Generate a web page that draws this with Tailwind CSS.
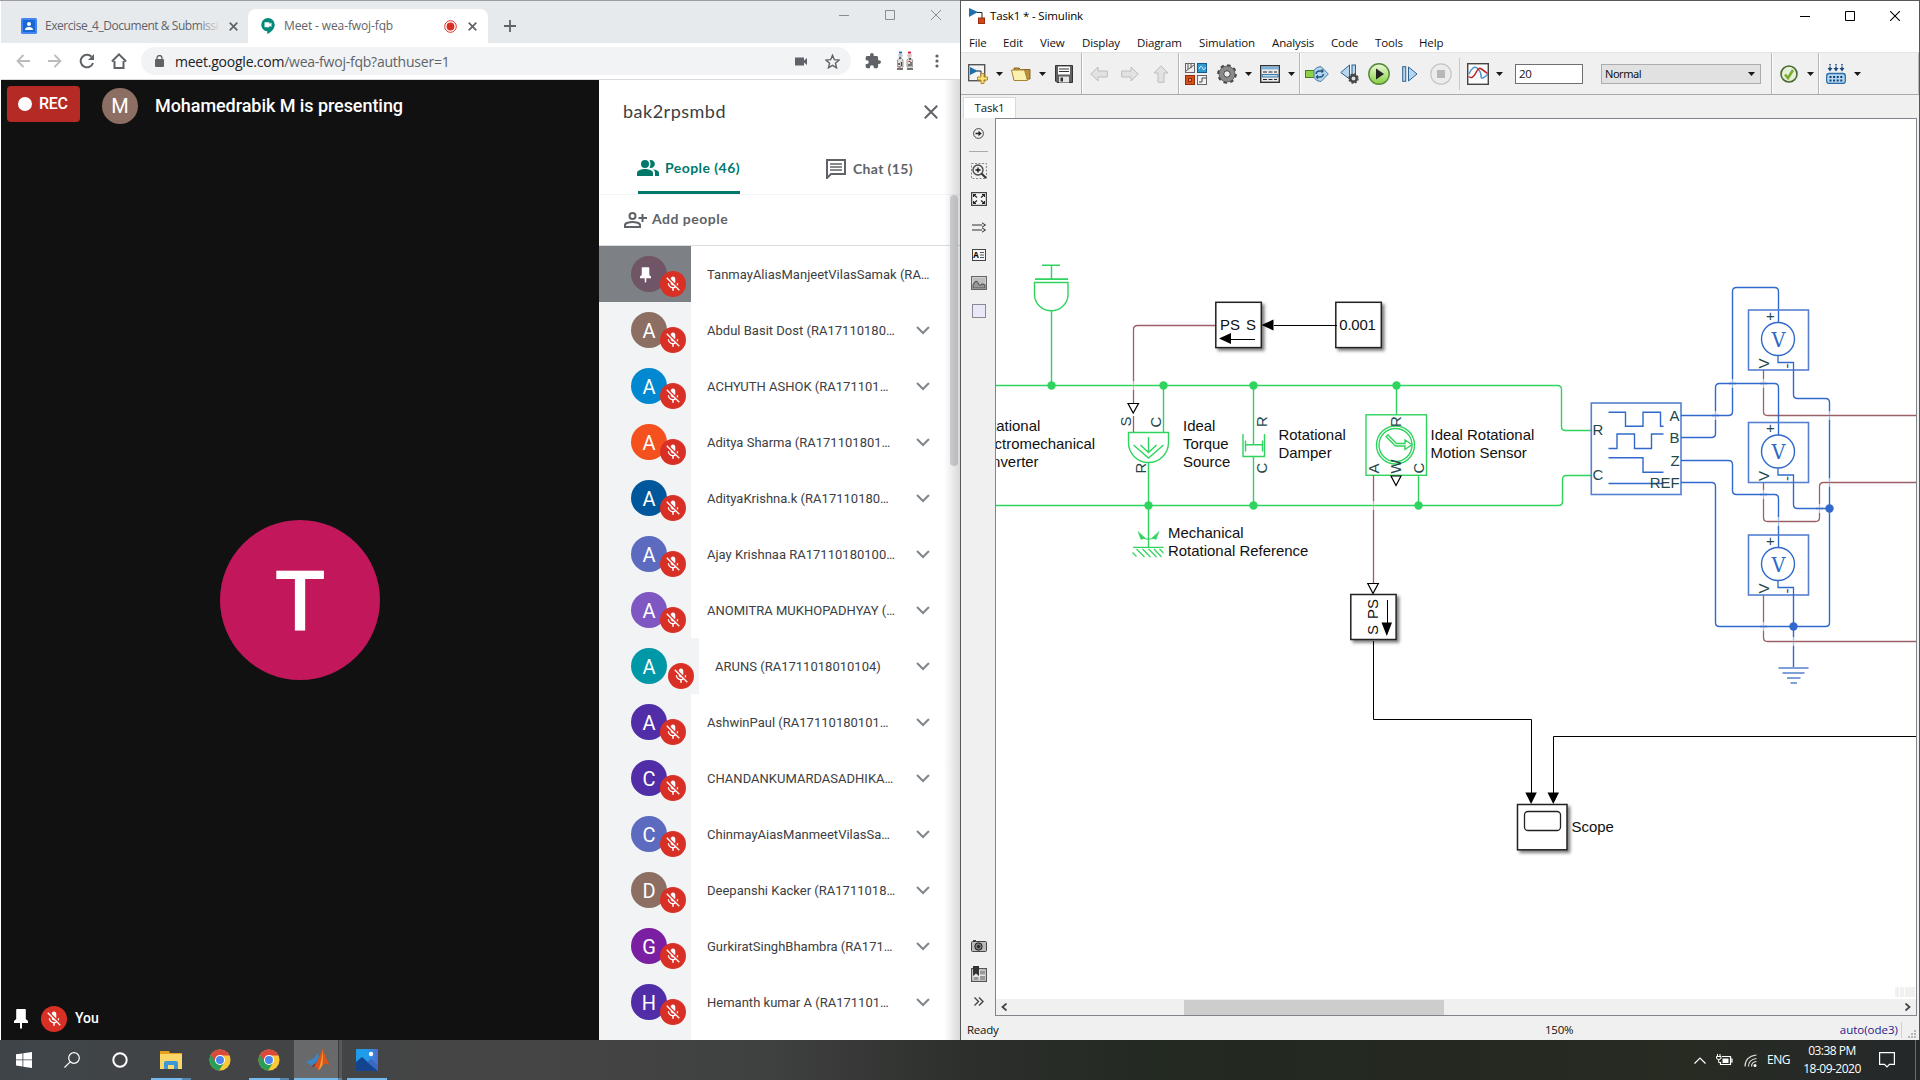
<!DOCTYPE html>
<html lang="en">
<head>
<meta charset="utf-8">
<title>Desktop</title>
<script src="https://cdn.jsdelivr.net/npm/@tailwindcss/browser@4"></script>
</head>
<body class="w-[1920px] h-[1080px] overflow-hidden flex flex-col bg-[#2a2d2c] font-['Open_Sans',sans-serif]">
<svg class="hidden">
  <symbol id="micoff" viewBox="0 0 24 24"><path fill="#fff" d="M19 11h-1.700c0 .74-.16 1.430-.43 2.050l1.230 1.230c.56-.98.9-2.090.9-3.280zm-4.020.17c0-.06.02-.11.02-.17V5c0-1.660-1.340-3-3-3S9 3.340 9 5v.18l5.980 5.990zM4.270 3L3 4.270l6.010 6.010V11c0 1.660 1.330 3 2.990 3 .22 0 .44-.03.65-.08l1.660 1.660c-.71.33-1.500.52-2.310.52-2.760 0-5.300-2.100-5.300-5.100H5c0 3.410 2.720 6.230 6 6.720V21h2v-3.280c.91-.13 1.770-.45 2.540-.9L19.730 21 21 19.730 4.270 3z"/></symbol>
  <symbol id="chev" viewBox="0 0 16 10"><path d="M2 2l6 6 6-6" fill="none" stroke="#80868b" stroke-width="2"/></symbol>
  <symbol id="caret" viewBox="0 0 7 4"><path d="M0 0h7L3.500 4z" fill="#1a1a1a"/></symbol>
  <symbol id="pin" viewBox="0 0 14 20"><path d="M3 0h8q.8 0 .8.800V10L14 12v2H8v5l-1 1-1-1v-5H0v-2l2.200-2V.8Q2.200 0 3 0z" fill="#fff"/></symbol>
  <symbol id="chrome" viewBox="0 0 48 48"><circle cx="24" cy="24" r="23" fill="#fbc936"/><path d="M24 24L4.100 12.500A23 23 0 0 0 22 46.900L33.500 29z" fill="#2a9d57"/><path d="M4.100 12.500A23 23 0 0 1 44.500 14H24L15 29z" fill="#d9493c"/><circle cx="24" cy="24" r="11" fill="#fff"/><circle cx="24" cy="24" r="8.700" fill="#4a84ee"/></symbol>
</svg>

<main class="flex h-[1040px]">
  <!-- Browser window -->
  <section class="w-[960px] h-full flex flex-col pl-px border-t border-[#9b9da0] bg-white">
    <div class="h-[42px] bg-[#e7eaed] flex items-end">
      <div class="w-[247px] h-[34px] flex items-center pl-5">
        <svg class="w-4 h-4" viewBox="0 0 16 16"><rect width="16" height="16" rx="1.500" fill="#4285f4"/><rect x="2" y="2" width="12" height="12" fill="#1967d2"/><circle cx="8" cy="6" r="2" fill="#fff"/><path d="M4 12q0-3 4-3t4 3z" fill="#fff"/></svg>
        <div class="relative ml-2 w-[176px] overflow-hidden whitespace-nowrap text-[12px] tracking-[-0.45px] text-[#5f6368]">Exercise_4_Document &amp; Submissi<span class="absolute right-0 top-0 h-full w-6 bg-gradient-to-r from-[#e7eaed]/0 to-[#e7eaed]"></span></div>
        <svg class="w-[9px] h-[9px] ml-[8px]" viewBox="0 0 9 9"><path d="M.7.7l7.600 7.600M8.300.7L.7 8.300" stroke="#5f6368" stroke-width="1.700"/></svg>
      </div>
      <div class="w-[240px] h-[34px] flex items-center bg-white rounded-t-lg pl-[13px]">
        <svg class="w-[14px] h-[16px]" viewBox="0 0 14 16"><path d="M7 0a6.700 6.700 0 0 0-6.700 6.700c0 3.500 2.700 6.300 6 6.600V16C10.500 14 13.700 10.600 13.700 6.700A6.700 6.700 0 0 0 7 0z" fill="#00897b"/><path d="M3.500 4.300h5v1.700l2-1.500v4.600l-2-1.500v1.700h-5z" fill="#fff"/></svg>
        <div class="ml-[9px] w-[152px] text-[12px] tracking-[-0.12px] text-[#5f6368] whitespace-nowrap">Meet - wea-fwoj-fqb</div>
        <svg class="w-[13px] h-[13px] ml-[8px]" viewBox="0 0 13 13"><circle cx="6.500" cy="6.500" r="5.800" fill="none" stroke="#d93025" stroke-width="1"/><circle cx="6.500" cy="6.500" r="3.900" fill="#d93025"/></svg>
        <svg class="w-[9px] h-[9px] ml-[11px]" viewBox="0 0 9 9"><path d="M.7.7l7.600 7.600M8.300.7L.7 8.300" stroke="#5f6368" stroke-width="1.700"/></svg>
      </div>
      <svg class="w-3 h-3 mb-[11px] ml-4" viewBox="0 0 12 12"><path d="M6 0v12M0 6h12" stroke="#5f6368" stroke-width="1.800"/></svg>
      <div class="flex-1"></div>
      <div class="self-start flex gap-9 mt-[9px] mr-[19px]">
        <svg class="w-[10px] h-[10px]" viewBox="0 0 10 10"><path d="M0 5.500h10" stroke="#8a8c8f"/></svg>
        <svg class="w-[10px] h-[10px]" viewBox="0 0 10 10"><path d="M.5.5h9v9h-9z" fill="none" stroke="#8a8c8f"/></svg>
        <svg class="w-[10px] h-[10px]" viewBox="0 0 10 10"><path d="M0 0l10 10M10 0L0 10" stroke="#8a8c8f"/></svg>
      </div>
    </div>
    <div class="h-[37px] shrink-0 border-b border-[#d8dadd] flex items-center pl-[15px]">
      <svg class="w-[14px] h-[14px]" viewBox="0 0 14 14"><path d="M14 7H1.500M7.500 1L1.500 7l6 6" fill="none" stroke="#babcbe" stroke-width="1.800"/></svg>
      <svg class="w-[14px] h-[14px] ml-[18px]" viewBox="0 0 14 14"><path d="M0 7h12.500M6.500 1l6 6-6 6" fill="none" stroke="#babcbe" stroke-width="1.800"/></svg>
      <svg class="w-[16px] h-[16px] ml-[17px]" viewBox="0 0 16 16"><path d="M14 10A6.300 6.300 0 1 1 12.500 3.600" fill="none" stroke="#5f6368" stroke-width="2"/><path d="M15 1v6H9z" fill="#5f6368"/></svg>
      <svg class="w-[16px] h-[16px] ml-4" viewBox="0 0 16 16"><path d="M3.500 8v7h9V8M.9 8.500L8 1.400l7.100 7.100" fill="none" stroke="#5f6368" stroke-width="2"/></svg>
      <div class="ml-[14px] w-[710px] h-7 rounded-full bg-[#f1f3f4] flex items-center pl-[14px]">
        <svg class="w-[9px] h-[12px]" viewBox="0 0 9 12"><rect y="4" width="9" height="8" rx="1" fill="#5f6368"/><path d="M2 5V3a2.500 2.500 0 0 1 5 0v2" fill="none" stroke="#5f6368" stroke-width="1.300"/></svg>
        <div class="ml-[11px] text-[14px] tracking-[-0.23px] text-[#5f6368]"><span class="text-[#202124]">meet.google.com</span>/wea-fwoj-fqb?authuser=1</div>
        <div class="flex-1"></div>
        <svg class="w-[12px] h-[9px]" viewBox="0 0 12 9"><path d="M0 .5h9v3l3-2.500v7L9 5.500v3H0z" fill="#5f6368"/></svg>
        <svg class="w-[15px] h-[15px] ml-[18px] mr-[11px]" viewBox="0 0 24 24"><path d="M12 2l2.900 7.100 7.600.6-5.800 5 1.800 7.400L12 18.100l-6.500 4 1.800-7.400-5.800-5 7.600-.6z" fill="none" stroke="#5f6368" stroke-width="2.200"/></svg>
      </div>
      <svg class="w-[16px] h-[16px] ml-[14px]" viewBox="1 1 22 22"><path fill="#5f6368" d="M20.500 11H19V7c0-1.100-.9-2-2-2h-4V3.500a2.500 2.500 0 0 0-5 0V5H4c-1.100 0-2 .9-2 2v3.800h1.500a2.700 2.700 0 0 1 0 5.400H2V20c0 1.100.9 2 2 2h3.800v-1.500a2.700 2.700 0 0 1 5.400 0V22H17c1.100 0 2-.9 2-2v-4h1.500a2.500 2.500 0 0 0 0-5z"/></svg>
      <svg class="w-[18px] h-[20px] ml-[15px]" viewBox="0 0 18 20"><path d="M1.500 9q3-4 5.500 0v7H1.500zM11 9q3-4 5.500 0v7H11z" fill="#dedad8" stroke="#8c8a8a" stroke-width=".8"/><circle cx="4.500" cy="4.500" r="2.300" fill="#c3cad6"/><circle cx="13.500" cy="4.500" r="2.300" fill="#dcc3c5"/><path d="M3 1.500h3" stroke="#2563c9" stroke-width="1.800"/><path d="M12 1.500h3" stroke="#d01840" stroke-width="1.800"/><path d="M3 7h2M2 13h2M5.500 11v4M13 8h2M12 14h2M15 11v4M1 18h6M11 18h6" stroke="#4a4545" stroke-width="1.300"/><path d="M12.500 10.500h2M2.500 16h2" stroke="#b0283a" stroke-width="1.200"/></svg>
      <svg class="w-[4px] h-[14px] ml-[21px]" viewBox="0 0 4 14"><circle cx="2" cy="2" r="1.600" fill="#5f6368"/><circle cx="2" cy="7" r="1.600" fill="#5f6368"/><circle cx="2" cy="12" r="1.600" fill="#5f6368"/></svg>
    </div>
    <div class="flex-1 min-h-0 flex">
      <div class="w-[598px] bg-[#111] flex flex-col font-[Roboto,sans-serif] text-white">
        <div class="flex items-center pl-1.5 pt-[6px]">
          <div class="w-[73px] h-9 rounded bg-[#b52a24] flex items-center pl-[11px] mb-1"><span class="w-[14px] h-[14px] rounded-full bg-white"></span><span class="ml-[7px] text-[16px] font-medium tracking-[-0.25px]">REC</span></div>
          <div class="ml-[22px] w-9 h-9 rounded-full bg-[#8d6e63] flex items-center justify-center text-[20px]">M</div>
          <div class="ml-[17px] -mt-[2px] text-[18px] font-medium tracking-[-0.06px]">Mohamedrabik M is presenting</div>
        </div>
        <div class="flex-1 flex items-center justify-center pt-[76px]"><div class="w-40 h-40 rounded-full bg-[#c2185b] flex items-center justify-center text-[84px] font-medium pt-1">T</div></div>
        <div class="h-[43px] flex items-center pl-[13px] shrink-0">
          <svg class="w-[14px] h-[20px]"><use href="#pin"/></svg>
          <div class="ml-[13px] w-[26px] h-[26px] rounded-full bg-[#d93025] flex items-center justify-center"><svg class="w-[18px] h-[18px]"><use href="#micoff"/></svg></div>
          <div class="ml-2 text-[14px] font-medium">You</div>
        </div>
      </div>
      <aside class="relative w-[361px] flex flex-col bg-white font-[Roboto,sans-serif]">
        <div class="h-[64px] flex items-center justify-between pl-6 pr-[22px] shrink-0 font-[Lato,sans-serif]">
          <div class="text-[18px] tracking-[0.5px] text-[#3c4043] -mt-px">bak2rpsmbd</div>
          <svg class="w-[14px] h-[14px]" viewBox="0 0 14 14"><path d="M.8.8l12.400 12.400M13.200.8L.8 13.200" stroke="#5f6368" stroke-width="2"/></svg>
        </div>
        <div class="h-[51px] flex items-start shrink-0 border-b border-[#f1f3f4] font-[Lato,sans-serif] text-[14px] font-bold">
          <div class="ml-[39px] h-[50px] w-[102px] flex items-center border-b-3 border-[#00796b] text-[#00796b]">
            <svg class="w-[22px] h-[16px] -ml-px shrink-0" viewBox="0 0 22 16"><circle cx="8" cy="4" r="4" fill="#00796b"/><path d="M0 16v-3c0-3 5-4 8-4s8 1 8 4v3zM12.500.3a4 4 0 1 1 0 7.500q2-3.800 0-7.500zM16 9.200c3 .5 6 1.500 6 3.800v3h-4v-3q0-2.500-2-3.800z" fill="#00796b"/></svg>
            <span class="ml-[6px] whitespace-nowrap tracking-[0.45px]">People (46)</span>
          </div>
          <div class="ml-[86px] h-[49px] flex items-center text-[#5f6368]">
            <svg class="w-[20px] h-[20px] mt-px" viewBox="0 0 20 20"><path d="M1 1h18v14H5l-4 4z" fill="none" stroke="#5f6368" stroke-width="2"/><path d="M4 5h12M4 8h12M4 11h12" stroke="#5f6368" stroke-width="1.600"/></svg>
            <span class="ml-[7px] tracking-[0.35px]">Chat (15)</span>
          </div>
        </div>
        <div class="h-[51px] shrink-0 border-b border-[#dadce0] flex items-center pl-[25px] text-[#5f6368] font-[Lato,sans-serif] text-[14px] font-bold">
          <svg class="w-[23px] h-[16px]" viewBox="0 0 23 16"><circle cx="8.500" cy="4" r="3" fill="none" stroke="#5f6368" stroke-width="2"/><path d="M1 15v-2c0-2 4.500-3 7.500-3s7.500 1 7.500 3v2zM18.500 2v8M14.500 6h8.500" fill="none" stroke="#5f6368" stroke-width="2"/></svg>
          <span class="ml-[5px] -mt-[3px] tracking-[0.5px]">Add people</span>
        </div>
        <div id="people" class="flex-1 overflow-hidden"></div>
        <div class="absolute right-0.5 top-[115px] w-2 h-[271px] rounded bg-[#d5d6da]"></div>
        <div class="absolute right-0 top-0 w-4 h-full bg-gradient-to-r from-black/0 to-black/15"></div>
      </aside>
    </div>
  </section>

  <!-- Simulink window -->
  <section class="w-[960px] h-full flex flex-col bg-[#f0f0f0] border-t border-x border-[#55585b] text-[#111]">
    <div class="h-[30px] bg-white flex items-center pl-2 pr-[19px]">
      <svg class="w-4 h-4" viewBox="0 0 16 16"><path d="M0 0l9 4-9 5z" fill="#1f6fa8"/><path d="M8 4.500h5V10" fill="none" stroke="#222"/><rect x="9.500" y="10" width="6" height="5.500" fill="#d1491b" stroke="#9b2d0c"/></svg>
      <div class="ml-[5px] text-[11.500px] tracking-[-0.15px] text-black">Task1 * - Simulink</div>
      <div class="flex-1"></div>
      <div class="flex gap-[35px] -mt-px">
        <svg class="w-[10px] h-[10px]" viewBox="0 0 10 10"><path d="M0 5.500h10" stroke="#000"/></svg>
        <svg class="w-[10px] h-[10px]" viewBox="0 0 10 10"><path d="M.5.5h9v9h-9z" fill="none" stroke="#000"/></svg>
        <svg class="w-[10px] h-[10px]" viewBox="0 0 10 10"><path d="M0 0l10 10M10 0L0 10" stroke="#000" stroke-width="1.100"/></svg>
      </div>
    </div>
    <nav class="h-[21px] bg-white flex items-center pl-2 text-[11.500px] tracking-[-0.13px] whitespace-nowrap pb-px pt-[4px]">
      <span class="w-[34px]">File</span><span class="w-[37px]">Edit</span><span class="w-[42px]">View</span><span class="w-[55px]">Display</span><span class="w-[62px]">Diagram</span><span class="w-[73px]">Simulation</span><span class="w-[59px]">Analysis</span><span class="w-[44px]">Code</span><span class="w-[44px]">Tools</span><span>Help</span>
    </nav>
    <div class="h-[43px] shrink-0 border-t border-[#e3e3e3] border-b border-b-[#a9a9a9] flex items-center text-[12px]">
      <svg class="w-5 h-5 ml-[7px]" viewBox="0 0 20 20"><rect x=".7" y=".7" width="16" height="16" fill="#f4f4f4" stroke="#555" stroke-width="1.400"/><path d="M2 3l8 4-8 4z" fill="#1f6fa8"/><path d="M9 7h4v5" fill="none" stroke="#222"/><path d="M13 9.500h3v3.500h3.500v3H16v3.500h-3V16H9.500v-3H13z" fill="#fbe17a" stroke="#b98a1c"/></svg>
      <svg class="w-[7px] h-1 ml-2"><use href="#caret"/></svg>
      <svg class="w-5 h-[14px] ml-2" viewBox="0 0 20 14"><path d="M3 13V1h5l1.500 1.500H19V12z" fill="#b98f42" stroke="#8a6420"/><path d="M.5 3h13l3 10.500H3z" fill="#fbf1ae" stroke="#a88430"/></svg>
      <svg class="w-[7px] h-1 ml-2"><use href="#caret"/></svg>
      <svg class="w-[18px] h-[18px] ml-[9px]" viewBox="0 0 18 18"><path d="M.5.5h17v17H2L.5 16z" fill="#606060" stroke="#333"/><rect x="3" y="1.500" width="12" height="8" fill="#fff"/><path d="M4 4h10M4 6.500h10" stroke="#333" stroke-width="1.200"/><rect x="4" y="11.500" width="10" height="6" fill="#e5e5e5"/><rect x="5.500" y="12.500" width="2.500" height="4" fill="#333"/></svg>
      <div class="w-[2px] h-full ml-2 bg-[#b5b5b5] border-r border-white"></div>
      <svg class="w-[18px] h-4 ml-[7px]" viewBox="0 0 18 16"><path d="M.8 8L8 1v4h9.300v6H8v4z" fill="#e2e2e2" stroke="#bdbdbd"/></svg>
      <svg class="w-[18px] h-4 ml-[13px]" viewBox="0 0 18 16"><path d="M17.200 8L10 1v4H.7v6H10v4z" fill="#e2e2e2" stroke="#bdbdbd"/></svg>
      <svg class="w-4 h-[18px] ml-[14px]" viewBox="0 0 16 18"><path d="M8 .8L15 8h-4v9.300H5V8H1z" fill="#e2e2e2" stroke="#bdbdbd"/></svg>
      <div class="w-[2px] h-full ml-[9px] bg-[#b5b5b5] border-r border-white"></div>
      <svg class="w-[22px] h-[22px] ml-[5px]" viewBox="0 0 22 22"><rect x=".5" y=".5" width="9" height="9" fill="#eee" stroke="#666"/><path d="M3 1v5M1 8L9 2M6 1v4" stroke="#555"/><rect x="12.500" y=".5" width="9" height="9" fill="#2f9bd0" stroke="#155c8c"/><path d="M14 6q2-5 3.500-1t3-1" fill="none" stroke="#d5f0ff"/><rect x=".5" y="12.500" width="9" height="9" fill="#d6501c" stroke="#8f2f0b"/><rect x="3.500" y="15.500" width="3" height="3" fill="#f08a5c" stroke="#8f2f0b"/><rect x="12.500" y="12.500" width="9" height="9" fill="#f2f2f2" stroke="#666"/><path d="M14 19h3v-4h4" fill="none" stroke="#444"/></svg>
      <svg class="w-5 h-5 ml-[10px]" viewBox="0 0 20 20"><circle cx="10" cy="10" r="8.300" fill="none" stroke="#444" stroke-width="3" stroke-dasharray="3.300 3.200"/><circle cx="10" cy="10" r="5.800" fill="none" stroke="#8a8a8a" stroke-width="4.500"/><circle cx="10" cy="10" r="8" fill="none" stroke="#555" stroke-width=".8"/><circle cx="10" cy="10" r="3.300" fill="#eee" stroke="#333"/></svg>
      <svg class="w-[7px] h-1 ml-2"><use href="#caret"/></svg>
      <svg class="w-5 h-[18px] ml-2" viewBox="0 0 20 18"><rect x=".7" y=".7" width="18.600" height="16.600" fill="#ececec" stroke="#333" stroke-width="1.400"/><rect x="1.400" y="1.400" width="17.200" height="3" fill="#7fb2d8"/><path d="M3 7h14M3 14.500h14" stroke="#222" stroke-dasharray="4 1.500"/><path d="M2 9.500h16v2.500H2z" fill="#bcdcf2" stroke="#1c5f96" stroke-width=".8"/></svg>
      <svg class="w-[7px] h-1 ml-2"><use href="#caret"/></svg>
      <div class="w-[2px] h-full ml-[4px] bg-[#b5b5b5] border-r border-white"></div>
      <svg class="w-6 h-[18px] ml-[4px]" viewBox="0 0 24 18"><rect x=".5" y="5.500" width="9" height="7" fill="#8fd04a" stroke="#4d7d1c"/><path d="M9 5.500q2-4 7-4L23.300 9 16 16.500q-5 0-7-4z" fill="#b5d4ef" stroke="#4a7aa5"/><path d="M11 9q.5-3 3.500-3h3M18.500 9q-.5 3-3.500 3h-3" fill="none" stroke="#21547f" stroke-width="1.500"/><path d="M16.500 3.500L19 6l-2.500 2.500zM13 9.500L10.500 12l2.500 2.500z" fill="#21547f"/></svg>
      <svg class="w-[19px] h-5 ml-[11px]" viewBox="0 0 19 20"><path d="M9.500 1v14L.8 8.500z" fill="#b7d7f0" stroke="#2d618f"/><rect x="12" y="1" width="3.500" height="12" fill="#b7d7f0" stroke="#2d618f"/><circle cx="13.500" cy="14.500" r="3.200" fill="#ddd" stroke="#444" stroke-width="2.400"/><circle cx="13.500" cy="14.500" r="4.600" fill="none" stroke="#444" stroke-width="1.200" stroke-dasharray="2 1.600"/></svg>
      <svg class="w-[22px] h-[22px] ml-[9px]" viewBox="0 0 22 22"><defs><linearGradient id="gp" x1="0" y1="0" x2="0" y2="1"><stop offset="0" stop-color="#eef9dc"/><stop offset="1" stop-color="#86cf3e"/></linearGradient></defs><circle cx="11" cy="11" r="10.200" fill="url(#gp)" stroke="#54893a" stroke-width="1.400"/><path d="M8 5.500l8 5.500-8 5.500z" fill="#222"/></svg>
      <svg class="w-4 h-4 ml-3" viewBox="0 0 16 16"><rect x=".7" y=".7" width="3" height="14.600" fill="#b7d7f0" stroke="#2d618f"/><path d="M6.500 1v14L15 8z" fill="#b7d7f0" stroke="#2d618f"/></svg>
      <svg class="w-[22px] h-[22px] ml-3" viewBox="0 0 22 22"><circle cx="11" cy="11" r="10.200" fill="#ececec" stroke="#c6c6c6" stroke-width="1.200"/><rect x="7" y="7" width="8" height="8" fill="#b7b7b7"/></svg>
      <div class="w-px h-8 ml-[7px] bg-[#c9c9c9]"></div>
      <svg class="w-[22px] h-[22px] ml-[7px]" viewBox="0 0 22 22"><rect x=".7" y=".7" width="20.600" height="20.600" fill="#fbfbfb" stroke="#444" stroke-width="1.400"/><path d="M2 11Q6 2 10 5t4 8 7-2" fill="none" stroke="#4a93cf" stroke-width="1.500"/><path d="M1.500 13.500q4 3 7-3t5-5 7 5" fill="none" stroke="#b8262a" stroke-width="1.500"/></svg>
      <svg class="w-[7px] h-1 ml-[7px]"><use href="#caret"/></svg>
      <div class="ml-3 w-[68px] h-5 border border-[#6f6f6f] bg-white flex items-center pl-[3px] pt-px text-[11.500px] tracking-[-0.4px]">20</div>
      <div class="ml-[18px] w-[160px] h-5 border border-[#adadad] bg-[#e1e1e1] flex items-center justify-between pl-[3px] pr-[5px] text-[11px] tracking-[-0.45px] font-['Noto_Sans',sans-serif]"><span class="pt-px">Normal</span><svg class="w-[7px] h-1"><use href="#caret"/></svg></div>
      <div class="w-[2px] h-full ml-[10px] bg-[#b5b5b5] border-r border-white"></div>
      <svg class="w-[18px] h-[18px] ml-[7px]" viewBox="0 0 18 18"><circle cx="9" cy="9" r="8" fill="#e6f0d8" stroke="#48692f" stroke-width="1.600"/><path d="M5 9.500l3 3.500 5-8" fill="none" stroke="#79ad2f" stroke-width="2.600"/></svg>
      <svg class="w-[7px] h-1 ml-[9px]"><use href="#caret"/></svg>
      <div class="w-[2px] h-full ml-[4px] bg-[#b5b5b5] border-r border-white"></div>
      <svg class="w-5 h-5 ml-[6px]" viewBox="0 0 20 20"><path d="M4 0v5M10 0v5M16 0v5" stroke="#1a4a80" stroke-width="1.500" stroke-dasharray="1.500 1"/><path d="M1.500 4h5L4 7.500zM7.500 4h5L10 7.500zM13.500 4h5L16 7.500z" fill="#1a4a80"/><rect x=".7" y="9.500" width="18.600" height="10" rx="2.500" fill="#b4d9f6" stroke="#2a6ca6" stroke-width="1.300"/><path d="M3.500 13h13M3.500 16.500h13" stroke="#123d6b" stroke-width="1.800" stroke-dasharray="2 1.600"/></svg>
      <svg class="w-[7px] h-1 ml-2"><use href="#caret"/></svg>
      <div class="ml-auto w-px h-full bg-[#bbb]"></div>
    </div>
    <div class="h-[23px] shrink-0 flex items-end pl-[2px]">
      <div class="w-[53px] h-[21px] bg-white border border-b-0 border-[#d9d9d9] flex items-center justify-center text-[11.500px] tracking-[-0.2px]">Task1</div>
    </div>
    <div class="flex-1 min-h-0 flex pr-[2px]">
      <div class="w-[34px] flex flex-col items-center pl-px">
        <div class="h-[30px] flex items-center"><svg class="w-[11px] h-[11px]" viewBox="0 0 11 11"><circle cx="5.500" cy="5.500" r="4.900" fill="none" stroke="#444"/><path d="M2.500 4.700h3V2.800L8.700 5.500 5.500 8.200V6.300h-3z" fill="#222"/></svg></div>
        <div class="w-[19px] h-px mt-[3px] mb-[5px] bg-[#aaa]"></div>
        <div class="h-7 flex items-center"><svg class="w-4 h-4" viewBox="0 0 16 16"><rect x=".5" y=".5" width="15" height="15" fill="none" stroke="#888" stroke-dasharray="2 1.500"/><circle cx="7" cy="7" r="5" fill="#eee" stroke="#444" stroke-width="1.300"/><path d="M7 4.500v5M4.500 7h5" stroke="#111" stroke-width="1.300"/><path d="M10.500 10.500l4.500 4.500" stroke="#333" stroke-width="2"/></svg></div>
        <div class="h-7 flex items-center"><svg class="w-4 h-[14px]" viewBox="0 0 16 14"><rect x=".6" y=".6" width="14.800" height="12.800" fill="#f3f3f3" stroke="#444" stroke-width="1.200"/><path d="M2.500 5V2.500H5M2.500 2.500L6 5.500M13.500 5V2.500H11M13.500 2.500L10 5.500M2.500 9v2.500H5M2.500 11.500L6 8.500M13.500 9v2.500H11M13.500 11.500L10 8.500" fill="none" stroke="#222" stroke-width="1.100"/></svg></div>
        <div class="h-7 flex items-center"><svg class="w-[14px] h-[11px]" viewBox="0 0 14 11"><path d="M0 3h10M0 8h10" stroke="#333" stroke-width="1.200"/><path d="M10 .8L13.500 3 10 5.200M10 5.800L13.500 8 10 10.200" fill="#ddd" stroke="#333"/></svg></div>
        <div class="h-7 flex items-center"><div class="w-[14px] h-3 border border-[#444] bg-[#f5f5f5] flex items-center justify-center gap-px"><span class="text-[8px] leading-none font-bold text-black">A</span><svg class="w-1 h-[6px]" viewBox="0 0 4 6"><path d="M0 .5h4M0 3h4M0 5.500h4" stroke="#333" stroke-width=".8"/></svg></div></div>
        <div class="h-7 flex items-center"><svg class="w-4 h-[14px]" viewBox="0 0 16 14"><rect x=".6" y=".6" width="14.800" height="12.800" fill="#eee" stroke="#666" stroke-width="1.200"/><rect x="2" y="2" width="12" height="10" fill="#bdbdbd"/><path d="M2 9q3-6 5-2t4 1l3 1v3H2z" fill="#999" stroke="#555" stroke-width="1.100"/></svg></div>
        <div class="h-7 flex items-center"><div class="w-[14px] h-[14px] border border-[#8a8a95] bg-[#e8e8f8]"></div></div>
        <div class="flex-1"></div>
        <div class="h-7 flex items-center"><svg class="w-4 h-3" viewBox="0 0 16 12"><rect x=".5" y="1.500" width="15" height="10" rx="1" fill="#bbb" stroke="#444"/><path d="M2 .5h3" stroke="#444"/><circle cx="7.500" cy="6.500" r="3.700" fill="#777" stroke="#222"/><circle cx="7.500" cy="6.500" r="1.500" fill="#222"/></svg></div>
        <div class="h-7 flex items-center"><svg class="w-4 h-4 -mt-px" viewBox="0 0 16 16"><path d="M.6 2.600h14.800v12.800H.6z" fill="#e5e5e5" stroke="#555" stroke-width="1.200"/><path d="M9 4.500h5v4H9zM9 10h5v4H9zM2.500 11h5v3h-5z" fill="#999"/><path d="M2 0h6v10L5 7.500 2 10z" fill="#333"/></svg></div>
        <div class="h-7 flex items-center"><svg class="w-[10px] h-[9px] -mt-px" viewBox="0 0 10 9"><path d="M.5.500l4 4-4 4M5 .5l4 4-4 4" fill="none" stroke="#444" stroke-width="1.400"/></svg></div>
      </div>
      <div class="w-[922px] flex flex-col bg-white border border-[#82848c]">
        <svg id="canvas" class="w-[920px] h-[880px] shrink-0" viewBox="996 119 920 880" font-family="'Liberation Sans',Arial,sans-serif" font-size="14.950">
          <defs>
            <filter id="sh" x="-20%" y="-20%" width="150%" height="150%"><feDropShadow dx="2.500" dy="2.500" stdDeviation="1.600" flood-color="#000" flood-opacity=".5"/></filter>
            <g id="vm" fill="none" stroke="#3069cb"><rect x="1748.500" y="310" width="60" height="60" stroke="#5580d0" stroke-width="1.600"/><circle cx="1778" cy="339" r="16.500" stroke-width="1.400"/><path d="M1778 355.500v7h15.500v8" stroke-width="1.300"/><text x="1778.500" y="346.500" font-family="'DejaVu Serif',serif" font-size="20" textLength="14" lengthAdjust="spacingAndGlyphs" text-anchor="middle" fill="#3069cb" stroke="none">V</text><g fill="#24474a" stroke="none"><text x="1766" y="320.500">+</text><text transform="translate(1769 368.500)rotate(-90)">V</text><text transform="translate(1792 368.500)rotate(-90)">-</text></g></g>
          </defs>
          <g fill="none" stroke="#2fd45e" stroke-width="1.400">
            <path d="M996 385.500H1557.500q4 0 4 4V426.500q0 4 4 4H1592M996 505.500H1558.500q4 0 4-4V479.500q0-4 4-4H1592"/>
            <path d="M1051.500 310.500v75M1042 265.200h18M1051.500 265v14M1163.500 386v46M1148.500 463v84M1253.500 386v58.500M1253.500 457v48M1396.500 386v28M1418.500 476v29"/>
            <path d="M1035 279.200h33" stroke-width="1.800"/>
            <path d="M1034.500 282.500h33.500v12a16.700 16.200 0 0 1-33.500 0z"/>
            <path d="M1128.500 432.500h40v10a20 20 0 0 1-40 0zM1148.500 437v14M1140.500 445l8 7.500 8-7.500M1133.500 445l15 13 15-13"/>
            <path d="M1243 434v22.500h21.500V434M1245.500 440.500v11M1262.500 440.500v11M1245.500 444.800h17"/>
            <rect x="1366" y="414.800" width="60.500" height="60.500"/>
            <circle cx="1395.500" cy="445" r="19"/><circle cx="1395.500" cy="445" r="16.500"/>
            <path d="M1386 436.500l2-1.500 8.500 8.500h8.500v-3.500l7 4.500-7 5v-3.500h-9.500z"/>
            <path d="M1133 547.300h30.500M1132.500 552.500l4 4M1136.500 549l8 8M1142.500 549l8 8M1148.500 549l8 8M1154 549l7.500 8M1159.500 549l4 4M1142 537.500q6.500 3.500 13 0" stroke-width="1.200"/>
            <path d="M1138 531.500l7 6.500-4 1.500zM1159 531.500l-7 6.500 4 1.500z" fill="#2fd45e" stroke-width=".5"/>
          </g>
          <g fill="none" stroke="#9b6065" stroke-width="1.300">
            <path d="M1217 325.500H1137.500q-4 0-4 4V404M1133.500 416v16M1373.500 475v108.500"/>
            <path d="M1763.500 370v41.500q0 4 4 4H1916M1763.500 482v35.500q0 4 4 4h48q4 0 4-4V486.500q0-4 4-4H1916M1763.500 595v42.500q0 4 4 4H1916"/>
          </g>
          <g fill="none" stroke="#3069cb" stroke-width="1.400">
            <rect x="1591.300" y="403" width="89.700" height="91.500" stroke="#5580d0" stroke-width="1.600"/>
            <path d="M1608.500 412.300H1625.500v14h17.500v-14h17.500v14h3M1608.500 448.500h8.500v-14.500h17.500v14.500h17v-14.500h12M1608.500 457.800h34.500v14.500h20.500M1608.500 483.500h55"/>
            <path d="M1681 415.500h47.500q4 0 4-4V291.500q0-4 4-4h38q4 0 4 4V322M1681 437.500h30.500q4 0 4-4V387.500q0-4 4-4h55q4 0 4 4V435M1681 460.500h47.500q4 0 4 4V490.500q0 4 4 4h38q4 0 4 4V547M1681 482.500h30.500q4 0 4 4V622.500q0 4 4 4H1825.500q4 0 4-4V402.500q0-4-4-4H1797.500q-4 0-4-4V370M1793.500 482v22.500q0 4 4 4h32M1793.500 594v73"/>
            <path d="M1778.500 668h30M1782.500 673h22M1787 678h13.500M1790.500 683h6.500" stroke="#5580d0" stroke-width="1.700"/>
          </g>
          <g fill="#fff" fill-opacity=".55"><rect x="1132" y="381" width="3" height="9"/><rect x="1372" y="501" width="3" height="9"/><rect x="1731" y="379" width="3" height="9"/><rect x="1714" y="411" width="3" height="9"/><rect x="1762" y="379" width="3" height="9"/><rect x="1828" y="411" width="3" height="9"/><rect x="1828" y="478" width="3" height="9"/><rect x="1818" y="504" width="3" height="9"/><rect x="1777" y="517" width="3" height="9"/><rect x="1762" y="490" width="3" height="9"/><rect x="1762" y="622" width="3" height="9"/><rect x="1792" y="637" width="3" height="9"/></g>
          <path d="M1130 385.500h8M1370 505.500h8" stroke="#2fd45e" stroke-width="1.200"/>
          <path d="M1729 383.500h7M1760 383.500h7M1712 415.500h7M1816 508.500h7M1760 494.500h7M1760 626.500h7" stroke="#3069cb" stroke-width="1.300"/>
          <path d="M1826 415.500h7M1826 482.500h7M1775 521.500h7M1790 641.500h7" stroke="#9b6065" stroke-width="1.200"/>
          <g fill="#2fd45e"><circle cx="1051.500" cy="385.500" r="4.200"/><circle cx="1163.500" cy="385.500" r="4.200"/><circle cx="1253.500" cy="385.500" r="4.200"/><circle cx="1396.500" cy="385.500" r="4.200"/><circle cx="1148.500" cy="505.500" r="4.200"/><circle cx="1253.500" cy="505.500" r="4.200"/><circle cx="1418.500" cy="505.500" r="4.200"/></g>
          <g fill="#3069cb"><circle cx="1829.500" cy="508.500" r="4.200"/><circle cx="1793.500" cy="626.500" r="4.200"/></g>
          <use href="#vm"/><use href="#vm" y="112.500"/><use href="#vm" y="225"/>
          <g stroke="#222" stroke-width="1.500">
            <rect x="1215.800" y="302.300" width="45.500" height="45.300" fill="#fff" filter="url(#sh)"/><rect x="1335.800" y="302.300" width="45.500" height="45.300" fill="#fff" filter="url(#sh)"/>
            <rect x="1350.800" y="594.500" width="45.300" height="45" fill="#fff" filter="url(#sh)"/><rect x="1517.500" y="804.500" width="49.500" height="45.300" fill="#fff" filter="url(#sh)"/>
            <rect x="1524.500" y="811.500" width="36" height="19" rx="3.500" fill="none" stroke-width="1.300"/>
          </g>
          <g fill="none" stroke="#000" stroke-width="1"><path d="M1274 325.500h63M1231 339.500h24M1387.500 600v24M1373.500 641v78.500H1531.500V793M1916 736.500H1553.500V793"/><path d="M1128 403.500h10.500l-5.300 9.500zM1391 476h10l-5 9.500zM1367.800 583.500h10.500l-5.300 10z" stroke-width="1.200" fill="#fff"/></g>
          <path d="M1261.500 325l12-5.500v11zM1219 338.500l12-5.500v11zM1381.500 622.500h10.500l-5.200 13.500zM1525.300 792.500h11.500l-5.700 11.500zM1547.500 792.500h11.500l-5.700 11.500z" fill="#000"/>
          <g fill="#111">
            <text x="1220" y="330">PS</text><text x="1246" y="330">S</text><text x="1339.300" y="330" textLength="36.500">0.001</text>
            <text transform="translate(1378 619)rotate(-90)">PS</text><text transform="translate(1378 635)rotate(-90)">S</text>
            <text x="973" y="431">Rotational</text><text x="973" y="449">Electromechanical</text><text x="973" y="467">Converter</text>
            <text x="1183" y="431">Ideal</text><text x="1183" y="449">Torque</text><text x="1183" y="467">Source</text>
            <text x="1278.500" y="440">Rotational</text><text x="1278.500" y="458">Damper</text>
            <text x="1430.500" y="440">Ideal Rotational</text><text x="1430.500" y="458">Motion Sensor</text>
            <text x="1168" y="538">Mechanical</text><text x="1168" y="556">Rotational Reference</text>
            <text x="1571.500" y="832">Scope</text>
          </g>
          <g fill="#24474a">
            <text transform="translate(1131 426.500)rotate(-90)">S</text><text transform="translate(1161 427.500)rotate(-90)">C</text><text transform="translate(1146 473.500)rotate(-90)">R</text>
            <text transform="translate(1267 427)rotate(-90)">R</text><text transform="translate(1267 473.500)rotate(-90)">C</text>
            <text transform="translate(1401 427)rotate(-90)">R</text><text transform="translate(1379 473.500)rotate(-90)">A</text><text transform="translate(1401 473.500)rotate(-90)">W</text><text transform="translate(1424 473.500)rotate(-90)">C</text>
            <text x="1592.500" y="435">R</text><text x="1592.500" y="480">C</text>
            <g text-anchor="end"><text x="1679.500" y="420.500">A</text><text x="1679.500" y="443">B</text><text x="1679.500" y="465.500">Z</text><text x="1679.500" y="488">REF</text></g>
          </g>
          <path d="M1895 987h4v10h-4zM1900 987h4v10h-4zM1905 987h10v10h-10z" fill="#f0f0f0"/>
        </svg>
        <div class="h-4 flex items-center bg-[#f0f0f0] px-[5px]">
          <svg class="w-[6px] h-2" viewBox="0 0 6 8"><path d="M5.500.5L1.500 4l4 3.500" fill="none" stroke="#444" stroke-width="1.800"/></svg>
          <div class="w-[260px] h-[15px] ml-[177px] bg-[#cdcdcd]"></div>
          <svg class="w-[6px] h-2 ml-auto" viewBox="0 0 6 8"><path d="M.5.5l4 3.500-4 3.500" fill="none" stroke="#444" stroke-width="1.800"/></svg>
        </div>
      </div>
    </div>
    <div class="h-[24px] shrink-0 flex items-center text-[11.500px] tracking-[-0.25px] pl-[6px] pt-[4px]">
      <div class="w-[578px]">Ready</div><div class="w-[279px]">150%</div><div class="flex-1 text-right text-[#27208c] tracking-[0px] pr-[3px]">auto(ode3)</div>
      <div class="w-px h-4 bg-[#d0d0d0]"></div>
      <svg class="w-[9px] h-[9px] ml-[6px] mt-2 mr-[2px]" viewBox="0 0 9 9"><path d="M6 0h2v2H6zM3 3h2v2H3zM6 3h2v2H6zM0 6h2v2H0zM3 6h2v2H3zM6 6h2v2H6z" fill="#b5b5b5"/></svg>
    </div>
  </section>
</main>

<!-- Taskbar -->
<footer class="h-10 flex items-center text-white bg-[linear-gradient(90deg,#3e454a_0%,#424446_10%,#454545_28%,#3f4040_40%,#2c2e2b_51%,#232a22_60%,#242820_75%,#272b22_88%,#25282a_100%)]">
  <svg class="w-4 h-4 ml-4" viewBox="0 0 16 16"><path d="M0 2.300l6.500-.9v6.100H0zM7.300 1.300L16 0v7.500H7.300zM0 8.300h6.500v6.200L0 13.600zM7.300 8.300H16V16l-8.700-1.300z" fill="#fff"/></svg>
  <svg class="w-4 h-4 ml-8" viewBox="0 0 16 16"><circle cx="10" cy="6" r="5.300" fill="none" stroke="#fff" stroke-width="1.200"/><path d="M6.200 9.800L.5 15.500" stroke="#fff" stroke-width="1.200"/></svg>
  <svg class="w-4 h-4 ml-8" viewBox="0 0 16 16"><circle cx="8" cy="8" r="6.700" fill="none" stroke="#fff" stroke-width="2"/></svg>
  <div class="ml-[23px] w-10 h-full relative flex items-center pl-[9px]">
    <svg class="w-[22px] h-[18px]" viewBox="0 0 22 18"><path d="M0 0h9l1 2h12v16H0z" fill="#e9a11b"/><path d="M0 3h22v15H0z" fill="#fbd668"/><path d="M4 18v-6q0-2 2-2h10q2 0 2 2v6h-4v-4H8v4z" fill="#3c97d9"/></svg>
    <span class="absolute left-0 bottom-0 w-[31px] h-0.5 bg-[#76b9ed]"></span><span class="absolute left-[31px] bottom-0 w-[9px] h-0.5 bg-[#5587ae]"></span>
  </div>
  <svg class="w-[22px] h-[22px] ml-[18px]"><use href="#chrome"/></svg>
  <div class="ml-[18px] w-10 h-full relative flex items-center pl-[9px]">
    <svg class="w-[22px] h-[22px]"><use href="#chrome"/></svg>
    <span class="absolute left-0 bottom-0 w-[31px] h-0.5 bg-[#76b9ed]"></span><span class="absolute left-[31px] bottom-0 w-[9px] h-0.5 bg-[#5587ae]"></span>
  </div>
  <div class="ml-[5px] w-12 h-full relative flex">
    <div class="w-11 h-full bg-white/20 flex items-center pl-3">
      <svg class="w-6 h-[22px]" viewBox="0 0 24 22"><path d="M0 13l8-4 4-5 2 9-6 5z" fill="#3c86c4"/><path d="M6 17l5-4q3-8 5.500-13 3 8 7.500 17-4-4-7-1-2.500 3-5 5.500-2-5-6-4.500z" fill="#d9541e"/><path d="M16.500 0q1 8 0 16-2 4-4 5.500 4-13 4-21.500z" fill="#f59a2b"/><path d="M16.500 0Q13 9 8 18l-2-1 5-4q3-8 5.500-13z" fill="#8e2417"/></svg>
    </div>
    <div class="w-1 h-full bg-white/10 border-l border-black/30"></div>
    <span class="absolute left-0 bottom-0 w-11 h-0.5 bg-[#76b9ed]"></span><span class="absolute left-11 bottom-0 w-1 h-0.5 bg-[#5587ae]"></span>
  </div>
  <div class="ml-[5px] w-10 h-full relative flex items-center pl-[9px]">
    <svg class="w-[22px] h-[22px]" viewBox="0 0 22 22"><defs><linearGradient id="ph"><stop offset=".5" stop-color="#1f9ce8"/><stop offset="1" stop-color="#5568cf"/></linearGradient></defs><rect width="22" height="22" rx="1" fill="url(#ph)"/><path d="M0 13l6-5 16 14H0z" fill="#13448f"/><path d="M11 13l4-3 7 6v6z" fill="#3a68c4"/><circle cx="15" cy="5" r="2.200" fill="#fff"/></svg>
    <span class="absolute left-0 bottom-0 w-10 h-0.5 bg-[#76b9ed]"></span>
  </div>
  <div class="flex-1"></div>
  <svg class="w-3 h-[7px]" viewBox="0 0 12 7"><path d="M.5 6.500L6 1l5.500 5.500" fill="none" stroke="#fff" stroke-width="1.200"/></svg>
  <svg class="w-[17px] h-3 ml-[10px]" viewBox="0 0 17 12"><path d="M6 2.500h8.500v8H4.500V8M14.500 5h1.500v3h-1.500" fill="none" stroke="#fff" stroke-width="1.200"/><path d="M6.500 4.500h6v4.500h-6z" fill="#fff"/><path d="M1.500 0v2M4 0v2M.5 2.500h4.500v1.500q0 1.500-2.200 1.500T.5 4zM2.700 5.500v3h2" fill="none" stroke="#fff" stroke-width="1"/></svg>
  <svg class="w-[13px] h-[13px] ml-[11px]" viewBox="0 0 13 13"><circle cx="11" cy="11.500" r="1.500" fill="#fff"/><path d="M7.500 12.500q0-4.500 5-5M4.500 12.500q0-7 8-8M1 12.500q0-10 11.500-11.500" fill="none" stroke="#ddd" stroke-width="1.200"/></svg>
  <div class="w-6 ml-[10px] text-[12px] tracking-[-0.5px]">ENG</div>
  <div class="w-[62px] ml-[10px] text-center text-[12px] leading-[18px] tracking-[-0.5px] whitespace-nowrap"><div>03:38 PM</div><div>18-09-2020</div></div>
  <svg class="w-4 h-4 ml-[16px]" viewBox="0 0 16 16"><path d="M.6.6h14.800v11.800H10.500L8 15l-2.500-2.600H.6z" fill="none" stroke="#fff" stroke-width="1.200"/></svg>
  <div class="w-px h-full ml-5 mr-1 bg-[#6a6d6a]"></div>
</footer>
<script>
const people = [
  ['', '#6f5566', 'TanmayAliasManjeetVilasSamak (RA…'],
  ['A', '#8d6e63', 'Abdul Basit Dost (RA17110180…'],
  ['A', '#0288d1', 'ACHYUTH ASHOK (RA171101…'],
  ['A', '#f4511e', 'Aditya Sharma (RA171101801…'],
  ['A', '#01579b', 'AdityaKrishna.k (RA17110180…'],
  ['A', '#5c6bc0', 'Ajay Krishnaa RA17110180100…'],
  ['A', '#7e57c2', 'ANOMITRA MUKHOPADHYAY (…'],
  ['A', '#0097a7', 'ARUNS (RA1711018010104)'],
  ['A', '#512da8', 'AshwinPaul (RA17110180101…'],
  ['C', '#512da8', 'CHANDANKUMARDASADHIKA…'],
  ['C', '#5c6bc0', 'ChinmayAiasManmeetVilasSa…'],
  ['D', '#8d6e63', 'Deepanshi Kacker (RA1711018…'],
  ['G', '#7b1fa2', 'GurkiratSinghBhambra (RA171…'],
  ['H', '#512da8', 'Hemanth kumar A (RA171101…'],
  ['', '', ''],
];
document.getElementById('people').innerHTML = people.map(([l, c, n], i) => {
  if (!n) return '<div class="w-[92px] h-14 bg-[#f1f3f4]"></div>';
  const wide = i === 7;
  const inner = i === 0 ? '<svg class="w-[11px] h-4 -ml-2"><use href="#pin"/></svg>' : l;
  return `<div class="h-14 flex items-center">
    <div class="relative h-full ${wide ? 'w-[100px]' : 'w-[92px]'} ${i === 0 ? 'bg-[#7d8084]' : 'bg-[#f1f3f4]'} pl-8 pt-[10px]">
      <div class="w-9 h-9 rounded-full flex items-center justify-center text-white text-[20px] pt-px" style="background:${c}">${inner}</div>
      <div class="absolute ${wide ? 'left-[69px]' : 'left-[61px]'} top-[25px] w-[26px] h-[26px] rounded-full bg-[#d93025] flex items-center justify-center"><svg class="w-[18px] h-[18px]"><use href="#micoff"/></svg></div>
    </div>
    <div class="ml-4 flex-1 text-[13px] tracking-[0.01px] pt-[2px] text-[#3c4043] whitespace-nowrap">${n}</div>
    ${i ? '<svg class="w-4 h-[10px] mr-[29px]"><use href="#chev"/></svg>' : ''}
  </div>`;
}).join('');
</script>
</body>
</html>
